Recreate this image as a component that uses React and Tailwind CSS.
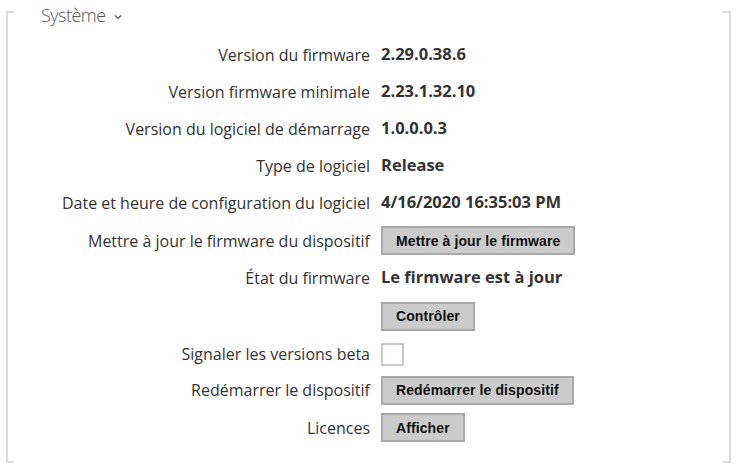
import React from "react";

const rows = [
  { label: "Version du firmware", value: "2.29.0.38.6", h: "h-[37px]" },
  { label: "Version firmware minimale", value: "2.23.1.32.10", h: "h-[37px]" },
  { label: "Version du logiciel de démarrage", value: "1.0.0.0.3", h: "h-[37px]" },
  { label: "Type de logiciel", value: "Release", h: "h-[37px]" },
  { label: "Date et heure de configuration du logiciel", value: "4/16/2020 16:35:03 PM", h: "h-[37px]" },
  { label: "Mettre à jour le firmware du dispositif", button: "Mettre à jour le firmware", h: "h-[39px]" },
  { label: "État du firmware", value: "Le firmware est à jour", h: "h-[35px]" },
  { label: "", button: "Contrôler", h: "h-[42px]" },
  { label: "Signaler les versions beta", checkbox: true, h: "h-[34px]" },
  { label: "Redémarrer le dispositif", button: "Redémarrer le dispositif", h: "h-[38px]" },
  { label: "Licences", button: "Afficher", h: "h-[37px]" },
];

function Button({ children }) {
  return (
    <button className="h-[29px] px-[13px] bg-[#cbcbcb] border-2 border-[#a9a9a9] text-[14px] font-bold text-[#111] font-['Liberation_Sans',Arial,sans-serif] leading-none tracking-[0.1px]">
      {children}
    </button>
  );
}

export default function App() {
  return (
    <div className="w-[740px] h-[468px] bg-white overflow-hidden pt-[11px] pl-[6px] font-['Open_Sans',sans-serif] text-[#333]">
      <div className="relative w-[725px] h-[452px] border-x-2 border-[#dcdcdc] pt-[25px]">
        {/* corner ticks */}
        <div className="absolute -left-[2px] top-0 w-[8px] h-[2px] bg-[#dcdcdc]" />
        <div className="absolute -left-[2px] bottom-0 w-[8px] h-[2px] bg-[#dcdcdc]" />
        <div className="absolute -right-[2px] top-0 w-[8px] h-[2px] bg-[#dcdcdc]" />
        <div className="absolute -right-[2px] bottom-0 w-[8px] h-[2px] bg-[#dcdcdc]" />

        {/* legend */}
        <div className="absolute left-[32px] -top-[11px] flex items-center gap-[8px] bg-white px-[1px]">
          <span className="text-[18px] font-light text-[#555] leading-[30px] tracking-[-0.5px]">Système</span>
          <svg width="8" height="6" viewBox="0 0 8 6" className="mt-[3px]">
            <path d="M1 1.5 L4 4.5 L7 1.5" fill="none" stroke="#555" strokeWidth="1.2" />
          </svg>
        </div>

        <div className="flex flex-col">
          {rows.map((r, i) => (
            <div key={i} className={`flex items-center gap-[11px] ${r.h}`}>
              <div className="w-[362px] text-right text-[16px] shrink-0 leading-none">{r.label}</div>
              <div className="flex items-center">
                {r.value && <span className="text-[16.5px] font-bold leading-none">{r.value}</span>}
                {r.button && <Button>{r.button}</Button>}
                {r.checkbox && <div className="w-[23px] h-[23px] border-2 border-[#c8c8c8] bg-white" />}
              </div>
            </div>
          ))}
        </div>
      </div>
    </div>
  );
}
